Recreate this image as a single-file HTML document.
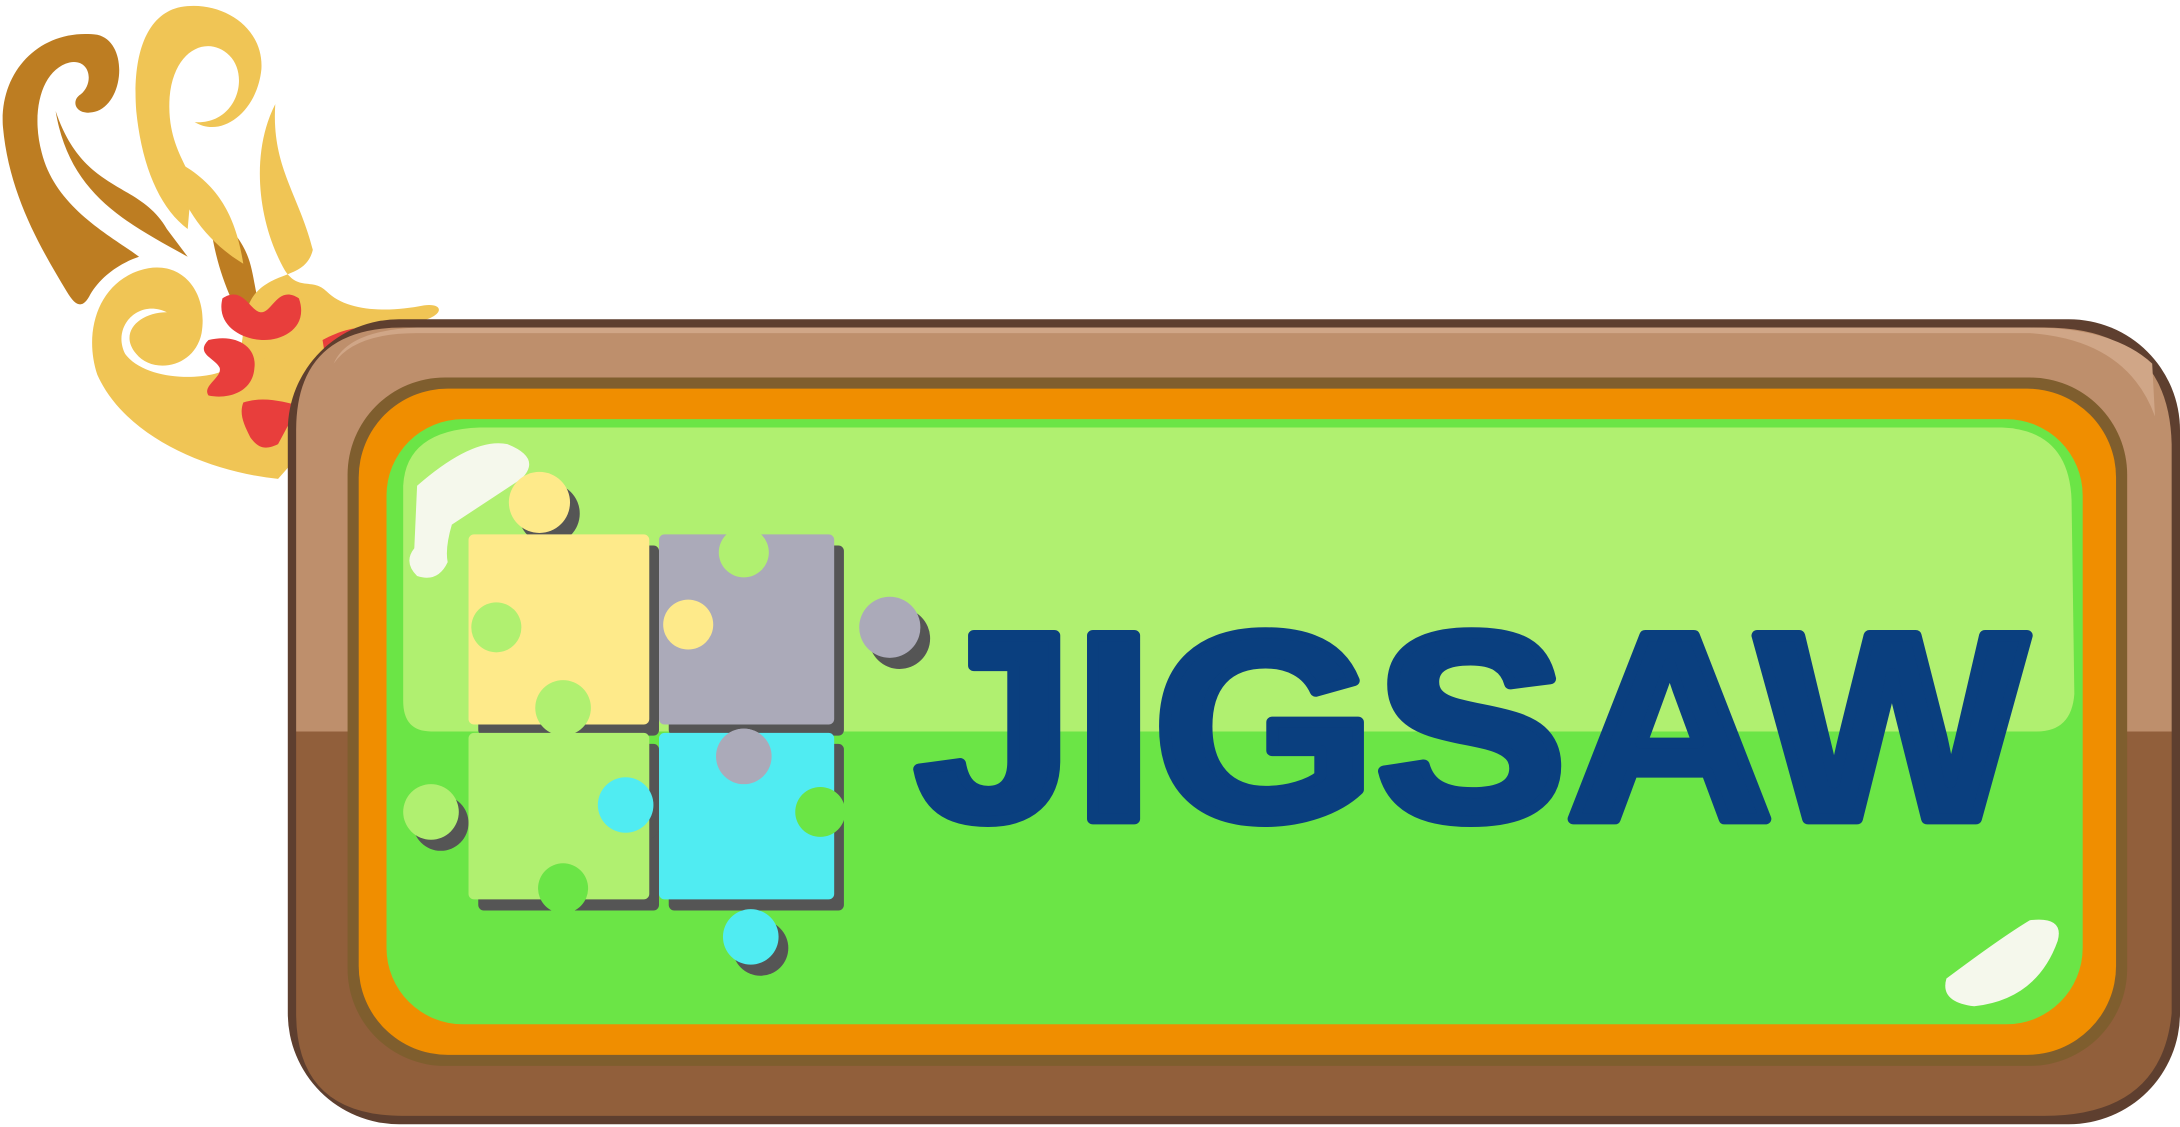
<!DOCTYPE html>
<html><head><meta charset="utf-8"><style>
html,body{margin:0;padding:0;background:#fff;width:2180px;height:1127px;overflow:hidden}
svg{display:block}
</style></head><body>
<svg width="2180" height="1127" viewBox="0 0 1568 812" preserveAspectRatio="none" xmlns="http://www.w3.org/2000/svg">
<!-- ornament -->
<path d="M70 25 C30 20 0 50 2 90 C6 140 30 180 48 210 C55 222 60 222 65 212 C72 200 85 190 100 185 C80 170 40 150 30 110 C22 80 30 50 50 45 C65 42 68 60 58 68 C50 73 55 85 70 80 C90 72 92 30 70 25Z" fill="#BD7D22"/>
<path d="M40 80 C50 140 90 160 135 185 L120 165 C100 130 60 140 40 80Z" fill="#BD7D22"/>
<path d="M150 140 C150 180 165 220 180 238 L190 230 C180 205 185 190 170 170Z" fill="#BD7D22"/>
<path d="M130 5 C105 10 95 40 98 80 C102 120 115 150 135 165 L138 130 C132 115 120 100 122 70 C125 35 150 25 165 40 C180 55 170 90 140 88 C160 100 185 80 188 50 C190 20 160 0 130 5Z" fill="#F0C555"/>
<path d="M125 120 C130 150 150 175 175 190 C170 160 160 135 130 118Z" fill="#F0C555"/>
<path d="M198 75 C180 110 185 160 205 195 C215 210 225 200 235 210 C250 225 280 225 305 220 C320 218 320 228 300 232 L200 345 C150 340 90 315 70 270 C60 240 70 205 100 195 C130 185 150 210 145 240 C140 265 110 270 98 255 C85 240 100 225 120 225 C100 215 80 235 90 255 C105 275 150 275 165 265 C180 255 170 225 185 210 C200 195 220 200 225 180 C215 140 195 120 198 75Z" fill="#F0C555"/>
<g fill="#E83E3C">
<path d="M160 215 C175 205 180 225 188 225 C196 225 200 205 215 215 C222 235 205 245 190 245 C175 245 155 235 160 215Z"/>
<path d="M150 245 C170 240 185 250 183 265 C182 282 165 288 150 285 C145 278 160 272 158 265 C155 258 140 255 150 245Z"/>
<path d="M175 290 C190 285 205 290 215 292 L200 320 C190 325 185 322 180 315 C175 305 172 298 175 290Z"/>
<path d="M232 245 C245 238 255 236 262 236 L250 285 C240 280 235 265 232 245Z"/>
</g>
<circle cx="207" cy="262" r="17" fill="#F0C555"/>
<!-- board -->
<rect x="207" y="230" width="1361" height="580" rx="80" fill="#5E3F2F"/>
<path d="M213 310 Q213 236 290 236 L1470 236 Q1560 236 1562 320 L1562 527 L213 527Z" fill="#BE8F6C"/>
<path d="M240 262 Q255 240 300 240 L1460 240 Q1530 245 1550 300 L1548 262 Q1520 236 1460 236 L300 236 Q250 238 240 262Z" fill="#D0A687"/>
<path d="M213 527 L1562 527 L1562 730 Q1555 804 1470 804 L290 804 Q213 804 213 730Z" fill="#915F3B"/>
<rect x="250" y="272" width="1280" height="496" rx="70" fill="#7F5E2E"/>
<rect x="258" y="280" width="1264" height="480" rx="64" fill="#F08E00"/>
<rect x="278" y="302" width="1220" height="436" rx="55" fill="#6BE546"/>
<path d="M290 350 Q292 310 345 308 L1440 308 Q1488 310 1490 360 L1492 500 Q1490 527 1465 527 L310 527 Q290 527 290 505Z" fill="#B0F070"/>
<path d="M300 350 Q340 315 365 320 Q390 330 375 345 L325 378 Q320 395 322 405 Q315 420 300 415 Q290 405 298 395Z" fill="#F5F8EC"/>
<path d="M1400 705 Q1440 675 1460 663 Q1485 660 1480 678 Q1465 720 1420 725 Q1395 722 1400 705Z" fill="#F5F8EC"/>
<!-- puzzle shadows -->
<g fill="#555" transform="translate(7,8)">
<rect x="337" y="385" width="130" height="137" rx="4"/><circle cx="388" cy="362" r="22"/>
<rect x="474" y="385" width="126" height="137" rx="4"/><circle cx="640" cy="452" r="22"/><circle cx="535" cy="545" r="20"/>
<rect x="337" y="528" width="130" height="120" rx="4"/><circle cx="310" cy="585" r="20"/>
<rect x="474" y="528" width="126" height="120" rx="4"/><circle cx="450" cy="580" r="20"/><circle cx="540" cy="675" r="20"/>
</g>
<!-- pieces -->
<g fill="#FEEA8A"><rect x="337" y="385" width="130" height="137" rx="4"/><circle cx="388" cy="362" r="22"/><circle cx="495" cy="450" r="18"/></g>
<circle cx="357" cy="452" r="18" fill="#B0F070"/>
<g fill="#ABAAB9"><rect x="474" y="385" width="126" height="137" rx="4"/><circle cx="640" cy="452" r="22"/><circle cx="535" cy="545" r="20"/></g>
<circle cx="535" cy="398" r="18" fill="#B0F070"/>
<circle cx="495" cy="450" r="18" fill="#FEEA8A"/>
<g fill="#B0F070"><rect x="337" y="528" width="130" height="120" rx="4"/><circle cx="310" cy="585" r="20"/><circle cx="405" cy="510" r="20"/></g>
<circle cx="405" cy="640" r="18" fill="#6BE546"/>
<g fill="#50ECF2"><rect x="474" y="528" width="126" height="120" rx="4"/><circle cx="450" cy="580" r="20"/><circle cx="540" cy="675" r="20"/></g>
<circle cx="590" cy="585" r="18" fill="#6BE546"/>
<circle cx="535" cy="545" r="20" fill="#ABAAB9"/>
<!-- title -->
<text x="658" y="590" font-family="Liberation Sans, sans-serif" font-weight="bold" font-size="192" textLength="800" lengthAdjust="spacingAndGlyphs" fill="#0A3F7F" stroke="#0A3F7F" stroke-width="8" stroke-linejoin="round">JIGSAW</text>
</svg>
</body></html>
